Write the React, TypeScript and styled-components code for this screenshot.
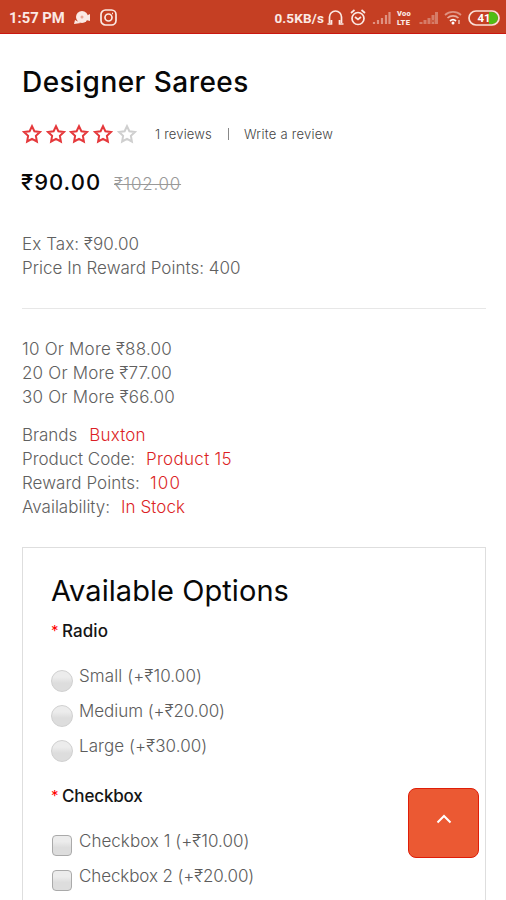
import React from 'react';
import styled, { createGlobalStyle } from 'styled-components';

const GlobalStyle = createGlobalStyle`
  * { box-sizing: border-box; }
  body { margin: 0; background: #fff; font-family: Inter, "Liberation Sans", sans-serif; }
`;

const Screen = styled.main`
  position: relative;
  height: 900px;
  overflow: hidden;
  background: #fff;
`;

const StatusBar = styled.header`
  display: flex;
  align-items: center;
  justify-content: space-between;
  height: 34px;
  padding: 2px 6px 0 9px;
  background: #c53f23;
  border-bottom: 1px solid #cb1710;
  color: #fbe9e4;
  font: 700 14px Roboto, sans-serif;
`;

const StatusGroup = styled.div<{ $gap: number }>`
  display: flex;
  align-items: center;
  gap: ${(p) => p.$gap}px;
`;

const Clock = styled.span`
  font-size: 14.8px;
`;

const Speed = styled.span`
  margin-right: -3px;
  font-size: 13.5px;
  letter-spacing: 0.15px;
`;

const Volte = styled.span`
  display: flex;
  flex-direction: column;
  width: 16px;
  font-size: 7.5px;
  font-weight: 900;
  line-height: 9px;
  letter-spacing: 0.3px;
`;

const Glyph = styled.svg`
  display: block;
  flex: none;
`;

const Content = styled.section`
  padding: 30px 20px 0 22px;
`;

const Text = styled.span<{ $track?: number }>`
  letter-spacing: ${(p) => p.$track ?? 0}px;
  white-space: nowrap;
`;

const Title = styled.h1`
  margin: 0;
  font-size: 28px;
  font-weight: 500;
  line-height: 36px;
  color: #080808;
`;

const Rating = styled.div`
  display: flex;
  align-items: center;
  height: 20px;
  margin-top: 24px;
  font-size: 13px;
  font-weight: 300;
  color: #444;
`;

const Stars = styled.div`
  display: flex;
  gap: 3.7px;
  width: 133px;
`;

const Divider = styled.span`
  width: 1px;
  height: 12px;
  margin: 0 15px 0 16px;
  background: #888;
`;

const Prices = styled.div`
  display: flex;
  align-items: center;
  height: 30px;
  margin-top: 23px;
`;

const Price = styled.strong`
  width: 93px;
  margin-left: -1px;
  font-size: 22px;
  font-weight: 500;
  color: #080808;
`;

const OldPrice = styled.del`
  padding-top: 4px;
  font-size: 17px;
  font-weight: 300;
  color: #999;
  text-decoration-thickness: 1px;
`;

const Details = styled.div<{ $top: number }>`
  margin-top: ${(p) => p.$top}px;
  color: #606060;
  font-size: 17px;
  font-weight: 300;
`;

const Line = styled.div`
  display: flex;
  height: 24px;
  line-height: 24px;
`;

const Value = styled.span<{ $gap: number }>`
  margin-left: ${(p) => p.$gap}px;
  color: #dc1f26;
`;

const Rule = styled.hr`
  height: 1px;
  margin: 28px 0 0;
  border: 0;
  background: #e7e7e7;
`;

const Options = styled.section`
  height: 380px;
  margin-top: 28px;
  padding: 23px 0 0 28px;
  border: 1px solid #dedede;
  border-bottom: 0;
`;

const OptionsTitle = styled.h2`
  margin: 0;
  font-size: 29px;
  font-weight: 400;
  line-height: 40px;
  letter-spacing: 0.06px;
  color: #080808;
`;

const GroupLabel = styled.h3<{ $top: number }>`
  display: flex;
  height: 24px;
  margin: ${(p) => p.$top}px 0 0;
  font-size: 17px;
  font-weight: 500;
  line-height: 24px;
  color: #151515;
`;

const Required = styled.span`
  width: 11px;
  font-weight: 400;
  font-size: 15px;
  color: #f00;
`;

const Choices = styled.div`
  display: grid;
  grid-auto-rows: 35.2px;
  margin-top: 21px;
`;

const Choice = styled.label`
  display: flex;
  align-items: flex-start;
  gap: 6px;
  font-size: 17px;
  font-weight: 300;
  line-height: 24px;
  color: #5c5c5c;
`;

const Control = styled.input<{ type: 'radio' | 'checkbox' }>`
  appearance: none;
  flex: none;
  width: ${(p) => (p.type === 'radio' ? 22 : 20)}px;
  height: ${(p) => (p.type === 'radio' ? 22 : 21)}px;
  margin: ${(p) => (p.type === 'radio' ? '6px 0 0' : '6px 1px 0')};
  border: ${(p) => (p.type === 'radio' ? '1px solid #d0d0d0' : '1.5px solid #aaa')};
  border-radius: ${(p) => (p.type === 'radio' ? '50%' : '4px')};
  background: linear-gradient(#ececec 30%, #dddddd 60%);
`;

const TopButton = styled.button`
  position: absolute;
  left: 408px;
  top: 788px;
  display: flex;
  justify-content: center;
  width: 71px;
  height: 70px;
  padding: 25px 0 0;
  border: 1px solid #df1d08;
  border-radius: 8px;
  background: #eb5933;
`;

const Star = ({ filled }: { filled: boolean }) => (
  <Glyph width="20" height="20" viewBox="0 0 20 20" fill="none" stroke={filled ? '#e5383b' : '#cfcfcf'} strokeWidth="2">
    <path d="M10 2.2 12.4 7.3 17.9 8 13.9 11.8 14.9 17.5 10 14.8 5.1 17.5 6.1 11.8 2.1 8 7.6 7.3Z" />
  </Glyph>
);

const Signal = ({ crossed }: { crossed?: boolean }) => (
  <Glyph width="19" height="15" viewBox="0 0 19 15" stroke={crossed ? '#d67c68' : '#df9281'} strokeWidth={crossed ? 3 : 2.2}>
    <path d="M2 14v-2M6 14v-4M10 14V8M14 14V5M17.500 14V2" />
    {crossed && <path d="m12 9 4 4M16 9l-4 4" stroke="#c95a40" strokeWidth="1" />}
  </Glyph>
);

const tiers: [string, number][] = [
  ['10 Or More ₹88.00', 0.22],
  ['20 Or More ₹77.00', 0.19],
  ['30 Or More ₹66.00', 0.22],
];

const facts: [string, string, number, number, number][] = [
  ['Brands', 'Buxton', 12, -0.05, 0.2],
  ['Product Code:', 'Product 15', 11, -0.04, 0.3],
  ['Reward Points:', '100', 10, 0.05, 1.2],
  ['Availability:', 'In Stock', 11, 0, 0.07],
];

const sizes: [string, number][] = [
  ['Small (+₹10.00)', 0.1],
  ['Medium (+₹20.00)', -0.04],
  ['Large (+₹30.00)', 0.08],
];

const boxes: [string, number][] = [
  ['Checkbox 1 (+₹10.00)', 0.03],
  ['Checkbox 2 (+₹20.00)', -0.11],
];

export default function App() {
  return (
    <Screen>
      <GlobalStyle />
      <StatusBar>
        <StatusGroup $gap={9}>
          <Clock>1:57 PM</Clock>
          <Glyph width="17" height="16" viewBox="0 0 17 16" fill="#fbe9e4">
            <circle cx="8" cy="7" r="6" />
            <path d="m1 10-1 4 7-1ZM12 6l4-2v7l-4-1Z" />
            <circle cx="8" cy="7" r="1.5" fill="#e9a495" />
          </Glyph>
          <Glyph width="17" height="17" viewBox="0 0 17 17" fill="none" stroke="#fbe9e4" strokeWidth="1.7">
            <rect x="1" y="1" width="15" height="15" rx="4.5" />
            <circle cx="8.5" cy="8.5" r="3.5" />
            <path d="M12 4.5h1" />
          </Glyph>
        </StatusGroup>
        <StatusGroup $gap={6}>
          <Speed>0.5KB/s</Speed>
          <Glyph width="17" height="16" viewBox="0 0 17 16" fill="none" stroke="#fbe9e4" strokeWidth="1.7">
            <path d="M2.500 13V7a6 6 0 0 1 12 0V13M0.5 14h4v-4M16.500 14h-4v-4" />
          </Glyph>
          <Glyph width="16" height="17" viewBox="0 0 16 17" fill="none" stroke="#fbe9e4" strokeWidth="1.7">
            <circle cx="8" cy="9.500" r="6" />
            <path d="M1 4 4.500 1M15 4l-3.500-3M5 8l3 2.500L11 8" />
          </Glyph>
          <Signal />
          <Volte>
            <span>Voo</span>
            <span>LTE</span>
          </Volte>
          <Signal crossed />
          <Glyph width="18" height="15" viewBox="0 0 18 15" fill="none" strokeWidth="1.7">
            <path d="M1 5a12 12 0 0 1 16 0" stroke="#df9281" />
            <path d="M3.500 8a8 8 0 0 1 11 0" stroke="#e9ad9f" />
            <path d="M6 11a4.500 4.500 0 0 1 6 0" stroke="#fff" />
            <circle cx="9" cy="13" r="1.500" fill="#fff" />
            <path d="M15 10v4" stroke="#e9ad9f" />
          </Glyph>
          <Glyph width="32" height="16" viewBox="0 0 32 16">
            <path d="M21 2h3a6 6 0 0 1 0 12h-3Z" fill="#50bd14" />
            <rect x="1" y="1" width="30" height="14" rx="7" fill="none" stroke="#fbe0d8" strokeWidth="1.700" />
            <text x="9.500" y="12" fontSize="11.500" fontWeight="700" fill="#fff">41</text>
          </Glyph>
        </StatusGroup>
      </StatusBar>

      <Content>
        <Title><Text $track={0.45}>Designer Sarees</Text></Title>
        <Rating>
          <Stars>
            {[1, 2, 3, 4, 5].map((n) => <Star key={n} filled={n < 5} />)}
          </Stars>
          <Text $track={0.18}>1 reviews</Text>
          <Divider />
          <Text $track={0.25}>Write a review</Text>
        </Rating>
        <Prices>
          <Price><Text $track={1}>₹90.00</Text></Price>
          <OldPrice><Text $track={0.75}>₹102.00</Text></OldPrice>
        </Prices>

        <Details $top={35}>
          <Line><Text $track={0.08}>Ex Tax: ₹90.00</Text></Line>
          <Line><Text $track={0.02}>Price In Reward Points: 400</Text></Line>
        </Details>
        <Rule />
        <Details $top={28}>
          {tiers.map(([label, track]) => (
            <Line key={label}><Text $track={track}>{label}</Text></Line>
          ))}
        </Details>
        <Details $top={14}>
          {facts.map(([name, value, gap, nameTrack, valueTrack]) => (
            <Line key={name}>
              <Text $track={nameTrack}>{name}</Text>
              <Value $gap={gap}><Text $track={valueTrack}>{value}</Text></Value>
            </Line>
          ))}
        </Details>

        <Options>
          <OptionsTitle>Available Options</OptionsTitle>
          <GroupLabel $top={8}><Required>*</Required><Text $track={0.07}>Radio</Text></GroupLabel>
          <Choices>
            {sizes.map(([label, track]) => (
              <Choice key={label}>
                <Control type="radio" name="size" />
                <Text $track={track}>{label}</Text>
              </Choice>
            ))}
          </Choices>
          <GroupLabel $top={14}><Required>*</Required><Text $track={-0.15}>Checkbox</Text></GroupLabel>
          <Choices>
            {boxes.map(([label, track]) => (
              <Choice key={label}>
                <Control type="checkbox" />
                <Text $track={track}>{label}</Text>
              </Choice>
            ))}
          </Choices>
        </Options>
      </Content>

      <TopButton aria-label="Back to top">
        <Glyph width="16" height="10" viewBox="0 0 16 10" fill="none" stroke="#fff" strokeWidth="2">
          <path d="m1.500 8.500 6.500-6.500 6.500 6.500" />
        </Glyph>
      </TopButton>
    </Screen>
  );
}
